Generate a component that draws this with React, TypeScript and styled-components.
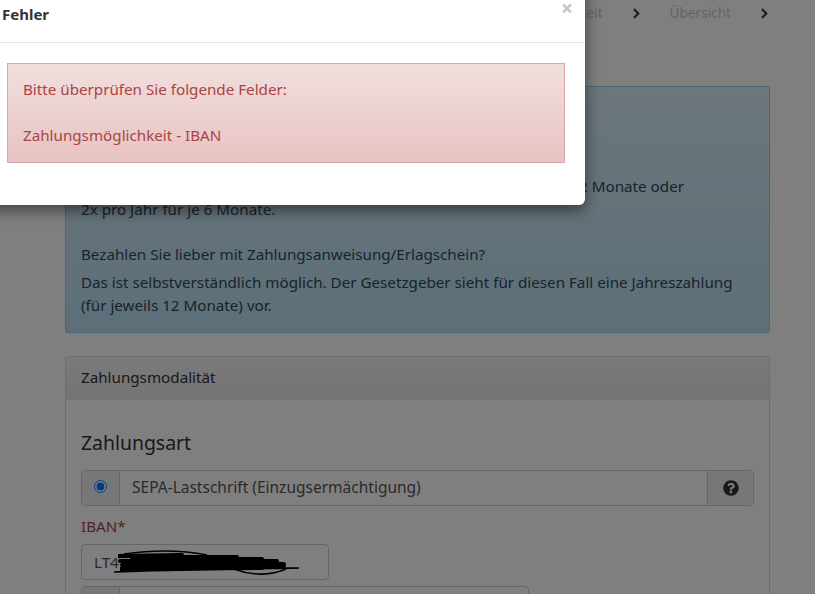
import React from 'react'
import styled, { createGlobalStyle } from 'styled-components'
import { FaChevronRight, FaQuestionCircle } from 'react-icons/fa'

const GlobalStyle = createGlobalStyle`
  html, body {
    margin: 0;
    height: 594px;
    overflow: hidden;
    background: #fff;
    font-family: "Noto Sans", "Open Sans", sans-serif;
    font-size: 15.2px;
    color: #333;
  }
`;

const Page = styled.div`
  position: relative;
  width: 815px;
  height: 594px;
  overflow: hidden;
  box-sizing: border-box;
  padding: 0 45px 0 65px;
`;

const Steps = styled.nav`
  height: 86px;
  box-sizing: border-box;
  padding-top: 3px;
  display: flex;
  justify-content: flex-end;
  align-items: flex-start;
  gap: 28px;
  font-size: 13.6px;
  line-height: 20px;
  color: #c8c8c8;
`;

const Chevron = styled.span`
  display: flex;
  height: 20px;
  align-items: center;
  color: #333;
  font-size: 11px;

  svg {
    stroke: currentColor;
    stroke-width: 24;
  }
`;

const InfoBox = styled.div`
  height: 247px;
  box-sizing: border-box;
  margin-bottom: 23px;
  padding: 88px 15px 0;
  background: linear-gradient(to bottom, #d9edf7, #b9def0);
  border: 1px solid #9acfea;
  border-radius: 2px;
  line-height: 23px;
  color: #2f4858;
`;

const InfoLine = styled.p<{ $gap?: number; $rightTo?: number }>`
  margin: ${(p) => p.$gap ?? 0}px 0 0;
  white-space: nowrap;
  ${(p) => p.$rightTo && `width: ${p.$rightTo}px; text-align: right;`}
`;

const Panel = styled.section`
  border: 1px solid #ddd;
  border-radius: 3px 3px 0 0;
  height: 400px;
`;

const PanelHeading = styled.div`
  height: 43px;
  box-sizing: border-box;
  padding: 0 15px 4px;
  display: flex;
  align-items: center;
  background: linear-gradient(to bottom, #f5f5f5, #e8e8e8);
`;

const PanelBody = styled.div`
  padding: 30px 15px 0;
`;

const SectionTitle = styled.h3`
  margin: 0 0 14px;
  font-size: 19.4px;
  font-weight: 400;
  line-height: 26px;
`;

const InputGroup = styled.div<{ $width?: number }>`
  display: flex;
  height: 36px;
  box-sizing: border-box;
  width: ${(p) => (p.$width ? `${p.$width}px` : '100%')};
  border: 1px solid #ccc;
  border-radius: 4px;
  background: #fff;
  overflow: hidden;
`;

const Addon = styled.div<{ $side: 'left' | 'right' }>`
  width: ${(p) => (p.$side === 'left' ? 37 : 45)}px;
  flex: none;
  display: flex;
  align-items: center;
  justify-content: center;
  background: #eee;
  ${(p) => (p.$side === 'left' ? 'border-right' : 'border-left')}: 1px solid #ccc;
`;

const Radio = styled.input`
  margin: 0 0 3px;
  width: 13px;
  height: 13px;
`;

const GroupText = styled.div`
  flex: 1;
  padding: 0 12px 2px;
  display: flex;
  align-items: center;
  font-size: 15.5px;
  color: #555;
`;

const FieldLabel = styled.label`
  display: block;
  margin: 10px 0 8px;
  line-height: 20px;
  color: #a94442;
`;

const TextInputBox = styled.div`
  position: relative;
  width: 248px;
  height: 36px;
  box-sizing: border-box;
  margin-bottom: 6px;
  padding: 0 12px;
  display: flex;
  align-items: center;
  border: 1px solid #ccc;
  border-radius: 4px;
  color: #555;
  background: #fff;
`;

const Scribble = styled.svg`
  position: absolute;
  left: 30px;
  top: 4px;
`;

const Backdrop = styled.div`
  position: absolute;
  inset: 0;
  background: rgba(0, 0, 0, 0.5);
`;

const Modal = styled.div`
  position: absolute;
  left: -13px;
  top: -20px;
  width: 598px;
  background: #fff;
  border-radius: 6px;
  box-shadow: 0 5px 15px rgba(0, 0, 0, 0.5);
`;

const ModalHeader = styled.div`
  position: relative;
  height: 63px;
  box-sizing: border-box;
  padding: 24px 15px 0;
  border-bottom: 1px solid #e5e5e5;
`;

const ModalTitle = styled.h4`
  margin: 0;
  font-size: 15px;
  line-height: 20px;
  font-weight: 700;
`;

const CloseButton = styled.span`
  position: absolute;
  right: 12px;
  top: 20px;
  font-size: 21px;
  line-height: 16px;
  font-weight: 700;
  color: #c4c4c4;
`;

const ModalBody = styled.div`
  padding: 20px 20px 42px;
`;

const Alert = styled.div`
  height: 100px;
  box-sizing: border-box;
  padding: 14px 15px;
  background: linear-gradient(to bottom, #f2dede, #e7c3c3);
  border: 1px solid #dca7a7;
  line-height: 23px;
  color: #a94442;
`;

const App = () => {
  return (
    <>
      <GlobalStyle />
      <Page>
        <Steps>
          <span>Zahlungsmöglichkeit</span>
          <Chevron><FaChevronRight /></Chevron>
          <span>Übersicht</span>
          <Chevron><FaChevronRight /></Chevron>
        </Steps>
        <InfoBox>
          <InfoLine $rightTo={603}>Sie können wahlweise in diesen Intervallen zahlen: 1x im Jahr für 12 Monate oder</InfoLine>
          <InfoLine>2x pro Jahr für je 6 Monate.</InfoLine>
          <InfoLine $gap={22}>Bezahlen Sie lieber mit Zahlungsanweisung/Erlagschein?</InfoLine>
          <InfoLine $gap={5}>Das ist selbstverständlich möglich. Der Gesetzgeber sieht für diesen Fall eine Jahreszahlung</InfoLine>
          <InfoLine>(für jeweils 12 Monate) vor.</InfoLine>
        </InfoBox>
        <Panel>
          <PanelHeading>Zahlungsmodalität</PanelHeading>
          <PanelBody>
            <SectionTitle>Zahlungsart</SectionTitle>
            <InputGroup>
              <Addon $side="left"><Radio type="radio" checked readOnly /></Addon>
              <GroupText>SEPA-Lastschrift (Einzugsermächtigung)</GroupText>
              <Addon $side="right"><FaQuestionCircle size={16} color="#333" /></Addon>
            </InputGroup>
            <FieldLabel>IBAN*</FieldLabel>
            <TextInputBox>
              LT4
              <Scribble width="190" height="28" viewBox="0 0 190 28">
                <path
                  d="M6 7L70 6L40 8L125 8L20 10L150 10L8 12L165 12L30 14L172 15L10 16L172 17L60 18L150 19L8 20"
                  fill="none"
                  stroke="#000"
                  strokeWidth="4"
                  strokeLinejoin="round"
                />
                <path
                  d="M12 5C40 1 70 1 95 6M2 23C50 21 120 20 187 19M122 20C140 27 160 27 176 19"
                  fill="none"
                  stroke="#000"
                  strokeWidth="1.6"
                />
              </Scribble>
            </TextInputBox>
            <InputGroup $width={448}>
              <Addon $side="left" />
            </InputGroup>
          </PanelBody>
        </Panel>
        <Backdrop />
        <Modal>
          <ModalHeader>
            <ModalTitle>Fehler</ModalTitle>
            <CloseButton>×</CloseButton>
          </ModalHeader>
          <ModalBody>
            <Alert>
              Bitte überprüfen Sie folgende Felder:
              <br />
              <br />
              Zahlungsmöglichkeit - IBAN
            </Alert>
          </ModalBody>
        </Modal>
      </Page>
    </>
  )
}

export default App;
